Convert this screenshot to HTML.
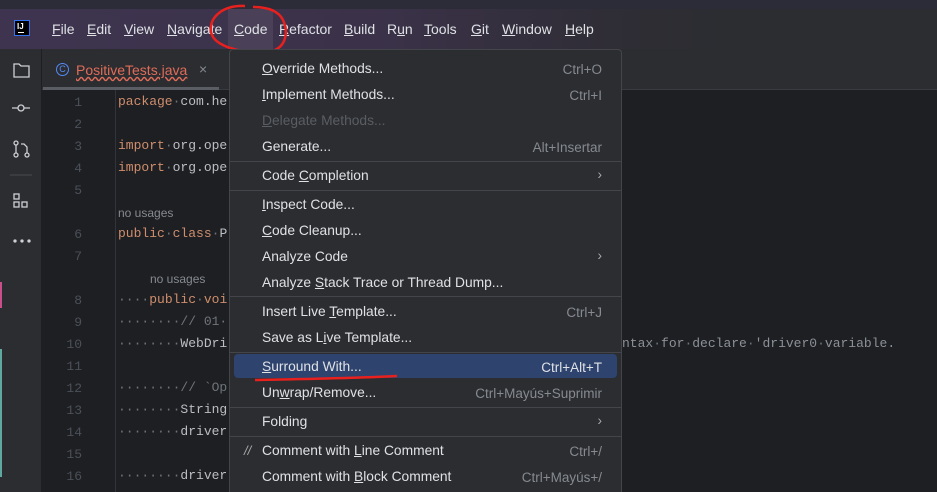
<!DOCTYPE html>
<html><head><style>
*{margin:0;padding:0;box-sizing:border-box}
html,body{width:937px;height:492px;overflow:hidden}
body{background:#1e1f22;font-family:"Liberation Sans",sans-serif;position:relative}
.top{position:absolute;left:0;top:0;width:937px;height:9px;background:#2b2c38}
.mb{position:absolute;left:0;top:9px;width:937px;height:40px;background:linear-gradient(90deg,#3e3450 0%,#3b3249 40%,#2f2d36 65%,#2b2d30 80%)}
.mb span{position:absolute;top:12px;color:#dfe1e5;font-size:14px}
.strip{position:absolute;left:0;top:49px;width:42px;height:443px;background:#2b2d30;border-right:1px solid #1e1f22}
.tabs{position:absolute;left:42px;top:49px;width:895px;height:41px;background:#2b2d30;border-bottom:1px solid #393b40}
.ln{position:absolute;left:42px;width:40px;text-align:right;color:#4b5059;font:13px "Liberation Mono",monospace}
.cd{position:absolute;font:13px "Liberation Mono",monospace;color:#bcbec4;white-space:pre}
.k{color:#cf8e6d}.g{color:#6f737a}
.nu{position:absolute;color:#868a91;font-size:12px}
.menu{position:absolute;left:229px;top:49px;width:393px;height:443px;background:#2b2d30;border:1px solid #43454a;border-bottom:none;border-radius:4px 4px 0 0}
.it{position:absolute;left:32px;font-size:13.8px;color:#dfe1e5}
.sc{position:absolute;right:19px;font-size:13.5px;color:#868a91}
.dis{color:#5a5d63}
.sep{position:absolute;left:0;width:391px;height:1px;background:#43454a}
u{text-decoration:underline}
</style></head><body>
<div class="top"></div>
<div class="mb">
<div style="position:absolute;left:14px;top:11px;width:16px;height:16px;background:#000;border:1px solid #3574f0"><div style="color:#fff;font:bold 8px sans-serif;position:absolute;left:2px;top:1px">IJ</div><div style="position:absolute;left:3px;bottom:2px;width:6px;height:1px;background:#fff"></div></div>
<span style="left:52px"><u>F</u>ile</span><span style="left:87px"><u>E</u>dit</span><span style="left:124px"><u>V</u>iew</span><span style="left:167px"><u>N</u>avigate</span>
<div style="position:absolute;left:228px;top:0;width:45px;height:40px;background:#4a4158"></div>
<span style="left:234px"><u>C</u>ode</span><span style="left:279px"><u>R</u>efactor</span><span style="left:344px"><u>B</u>uild</span><span style="left:387px">R<u>u</u>n</span><span style="left:424px"><u>T</u>ools</span><span style="left:471px"><u>G</u>it</span><span style="left:502px"><u>W</u>indow</span><span style="left:565px"><u>H</u>elp</span>
</div>
<svg style="position:absolute;left:203px;top:1px" width="90" height="56"><path d="M42 5 C20 4 6 16 8 31 C11 47 44 53 64 51 C83 49 86 32 80 19 C75 9 63 6 50 6" fill="none" stroke="#e8201e" stroke-width="2.5"/></svg>
<div class="strip">
<svg width="42" height="443" fill="none" stroke="#ced0d6" stroke-width="1.3">
<path d="M14 15h5l2 2h8v11h-15z"/>
<circle cx="21" cy="59" r="3"/><path d="M12 59h6M24 59h6"/>
<circle cx="16" cy="94" r="2"/><circle cx="16" cy="106" r="2"/><circle cx="27" cy="106" r="2"/><path d="M16 96v8M27 104v-6l-3-3h-3"/>
<path d="M10 126h22" stroke="#43454a"/>
<rect x="14" y="145" width="5" height="5"/><rect x="14" y="153" width="5" height="5"/><rect x="22" y="153" width="5" height="5"/>
<circle cx="15" cy="192" r="1" fill="#ced0d6"/><circle cx="22" cy="192" r="1" fill="#ced0d6"/><circle cx="29" cy="192" r="1" fill="#ced0d6"/>
</svg>
<div style="position:absolute;left:0;top:233px;width:2px;height:26px;background:#c94f8a"></div>
<div style="position:absolute;left:0;top:300px;width:2px;height:128px;background:#5fa8a0"></div>
</div>
<div class="tabs">
<div style="position:absolute;left:14px;top:14px;width:13px;height:13px;border:1.5px solid #548af7;border-radius:50%;color:#548af7;font-size:9px;text-align:center;line-height:10px">C</div>
<div style="position:absolute;left:34px;top:13px;color:#e06c5a;font-size:14px;text-decoration:underline wavy #e06c5a">PositiveTests.java</div>
<div style="position:absolute;left:157px;top:12px;color:#868a91;font-size:14px">×</div>
<div style="position:absolute;left:1px;top:38px;width:176px;height:3px;background:#5a5d63"></div>
</div>
<div style="position:absolute;left:115px;top:90px;width:1px;height:402px;background:#313438"></div>
<div class="ln" style="top:95px">1</div><div class="ln" style="top:117px">2</div><div class="ln" style="top:139px">3</div><div class="ln" style="top:161px">4</div><div class="ln" style="top:183px">5</div><div class="ln" style="top:227px">6</div><div class="ln" style="top:249px">7</div><div class="ln" style="top:293px">8</div><div class="ln" style="top:315px">9</div><div class="ln" style="top:337px">10</div><div class="ln" style="top:359px">11</div><div class="ln" style="top:381px">12</div><div class="ln" style="top:403px">13</div><div class="ln" style="top:425px">14</div><div class="ln" style="top:447px">15</div><div class="ln" style="top:469px">16</div>
<div class="cd" style="left:118px;top:94px"><span class="k">package</span><span class="g">·</span>com.he</div>
<div class="cd" style="left:118px;top:138px"><span class="k">import</span><span class="g">·</span>org.ope</div>
<div class="cd" style="left:118px;top:160px"><span class="k">import</span><span class="g">·</span>org.ope</div>
<div class="nu" style="left:118px;top:206px">no usages</div>
<div class="cd" style="left:118px;top:226px"><span class="k">public</span><span class="g">·</span><span class="k">class</span><span class="g">·</span>P</div>
<div class="nu" style="left:150px;top:272px">no usages</div>
<div class="cd" style="left:118px;top:292px"><span class="g">····</span><span class="k">public</span><span class="g">·</span><span class="k">voi</span></div>
<div class="cd" style="left:118px;top:314px"><span class="g">········// 01·</span></div>
<div class="cd" style="left:118px;top:336px"><span class="g">········</span>WebDri</div>
<div class="cd" style="left:622px;top:336px;color:#8c9098">ntax<span class="g">·</span>for<span class="g">·</span>declare<span class="g">·</span>'driver0<span class="g">·</span>variable.</div>
<div class="cd" style="left:118px;top:380px"><span class="g">········// `Op</span></div>
<div class="cd" style="left:118px;top:402px"><span class="g">········</span>String</div>
<div class="cd" style="left:118px;top:424px"><span class="g">········</span>driver</div>
<div class="cd" style="left:118px;top:468px"><span class="g">········</span>driver</div>
<div class="menu">
<div class="it" style="top:11px"><u>O</u>verride Methods...</div><div class="sc" style="top:12px">Ctrl+O</div>
<div class="it" style="top:37px"><u>I</u>mplement Methods...</div><div class="sc" style="top:38px">Ctrl+I</div>
<div class="it dis" style="top:63px"><u>D</u>elegate Methods...</div>
<div class="it" style="top:89px">Generate...</div><div class="sc" style="top:90px">Alt+Insertar</div>
<div class="sep" style="top:111px"></div>
<div class="it" style="top:118px">Code <u>C</u>ompletion</div><div class="sc" style="top:117px;color:#aaa">›</div>
<div class="sep" style="top:140px"></div>
<div class="it" style="top:147px"><u>I</u>nspect Code...</div>
<div class="it" style="top:173px"><u>C</u>ode Cleanup...</div>
<div class="it" style="top:199px">Analyze Code</div><div class="sc" style="top:198px;color:#aaa">›</div>
<div class="it" style="top:225px">Analyze <u>S</u>tack Trace or Thread Dump...</div>
<div class="sep" style="top:246px"></div>
<div class="it" style="top:254px">Insert Live <u>T</u>emplate...</div><div class="sc" style="top:255px">Ctrl+J</div>
<div class="it" style="top:280px">Save as L<u>i</u>ve Template...</div>
<div class="sep" style="top:302px"></div>
<div style="position:absolute;left:4px;top:304px;width:383px;height:24px;background:#2e436e;border-radius:4px"></div>
<div class="it" style="top:309px"><u>S</u>urround With...</div><div class="sc" style="top:310px;color:#dfe1e5">Ctrl+Alt+T</div>
<svg style="position:absolute;left:20px;top:322px" width="152" height="12"><path d="M5 8 C50 7 110 6 147 4" stroke="#e8201e" stroke-width="2.5" fill="none"/></svg>
<div class="it" style="top:335px">Un<u>w</u>rap/Remove...</div><div class="sc" style="top:336px">Ctrl+Mayús+Suprimir</div>
<div class="sep" style="top:357px"></div>
<div class="it" style="top:364px">Folding</div><div class="sc" style="top:363px;color:#aaa">›</div>
<div class="sep" style="top:386px"></div>
<div style="position:absolute;left:14px;top:393px;color:#aaa;font-size:13px;font-style:italic">//</div>
<div class="it" style="top:393px">Comment with <u>L</u>ine Comment</div><div class="sc" style="top:394px">Ctrl+/</div>
<div class="it" style="top:419px">Comment with <u>B</u>lock Comment</div><div class="sc" style="top:420px">Ctrl+Mayús+/</div>
</div>
</body></html>
